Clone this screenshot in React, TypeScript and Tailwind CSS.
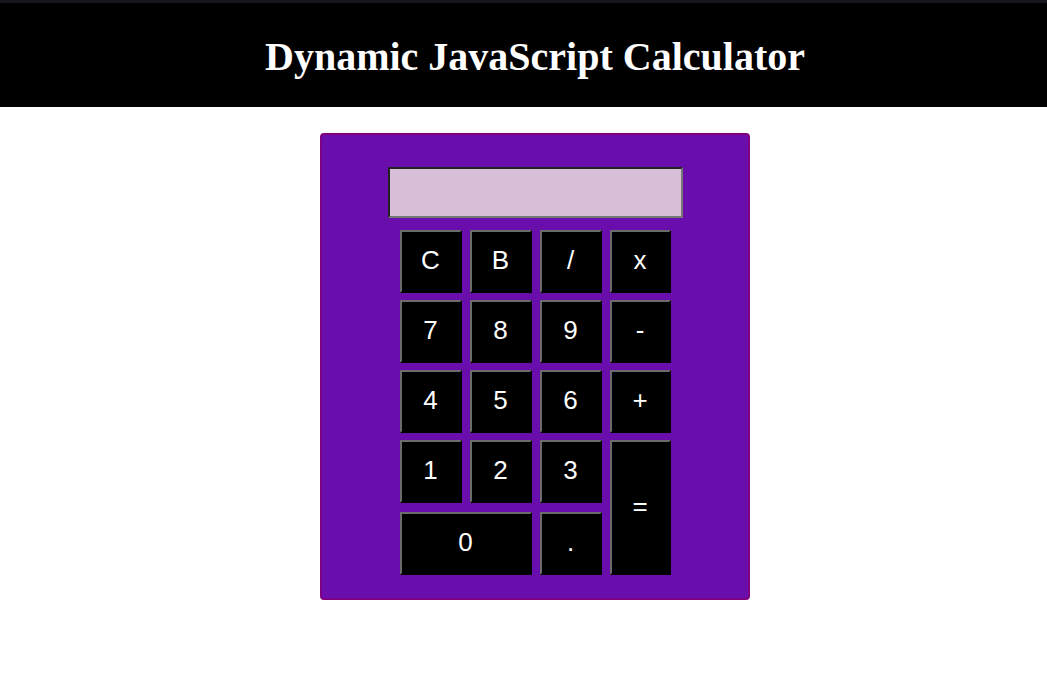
const KEYS: { label: string; cls?: string }[] = [
  { label: "C" },
  { label: "B" },
  { label: "/" },
  { label: "x" },
  { label: "7" },
  { label: "8" },
  { label: "9" },
  { label: "-" },
  { label: "4" },
  { label: "5" },
  { label: "6" },
  { label: "+" },
  { label: "1" },
  { label: "2" },
  { label: "3" },
  { label: "=", cls: "row-span-2 h-full" },
  { label: "0", cls: "col-span-2 self-end h-[63px]" },
  { label: ".", cls: "self-end h-[63px]" },
];

function Key({ label, cls = "h-[63px]" }: { label: string; cls?: string }) {
  return (
    <button
      className={`flex items-center justify-center pb-[2px] bg-black text-white text-[26px] border-2 border-t-[#6b6b6b] border-l-[#6b6b6b] border-r-black border-b-black ${cls}`}
      style={{ fontFamily: '"Liberation Sans", Arial, sans-serif' }}
    >
      {label}
    </button>
  );
}

export default function App() {
  return (
    <div className="min-h-[682px] bg-white">
      <header className="border-t-[3px] border-[#16161e] bg-black h-[107px] flex items-center justify-center pl-[23px]">
        <h1
          className="text-white font-bold text-[40px] leading-none pt-[3px]"
          style={{ fontFamily: '"Liberation Serif", "Times New Roman", serif' }}
        >
          Dynamic JavaScript Calculator
        </h1>
      </header>
      <div className="flex justify-center pt-[26px] pl-[23px]">
        <div className="w-[430px] h-[467px] bg-[#6a0dad] border-2 border-[#800080] rounded-[4px] flex flex-col items-center pt-[32px]">
          <div className="w-[295px] h-[51px] bg-[#d8bfd8] border-2 border-t-[#222] border-l-[#222] border-r-[#777] border-b-[#777]" />
          <div className="mt-[12px] grid grid-cols-[62px_62px_62px_61px] grid-rows-[63px_63px_63px_63px_65px] gap-x-[8px] gap-y-[7px]">
            {KEYS.map((k) => (
              <Key key={k.label} label={k.label} cls={k.cls} />
            ))}
          </div>
        </div>
      </div>
    </div>
  );
}
